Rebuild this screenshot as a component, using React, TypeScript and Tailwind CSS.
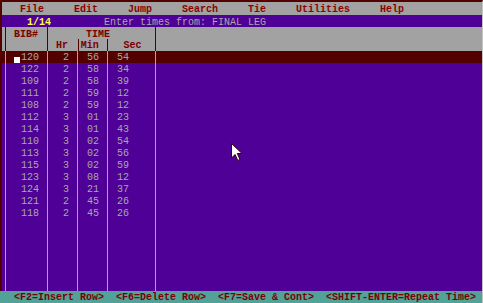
const rows: [string, string, string, string][] = [
  ['120', '2', '56', '54'],
  ['122', '2', '58', '34'],
  ['109', '2', '58', '39'],
  ['111', '2', '59', '12'],
  ['108', '2', '59', '12'],
  ['112', '3', '01', '23'],
  ['114', '3', '01', '43'],
  ['110', '3', '02', '54'],
  ['113', '3', '02', '56'],
  ['115', '3', '02', '59'],
  ['123', '3', '08', '12'],
  ['124', '3', '21', '37'],
  ['121', '2', '45', '26'],
  ['118', '2', '45', '26'],
]

const font = { fontFamily: '"Liberation Mono", "DejaVu Sans Mono", monospace' }

export default function App() {
  return (
    <div className="relative flex h-[303px] w-[483px] flex-col bg-[#4f0096] text-[10px] leading-[14px]" style={font}>
      <div className="flex flex-1 flex-col border-l-2 border-t-2 border-r border-[#520000] border-r-[#c4c4c4]">
        {/* menu */}
        <div className="h-[13px] overflow-hidden bg-[#a2a2a2] pl-[18px] font-bold leading-[15px] whitespace-pre text-[#8c0000]">
          File     Edit     Jump     Search     Tie     Utilities     Help
        </div>

        {/* status line */}
        <div className="flex h-[12px] overflow-hidden bg-[#4f0096] leading-[15px] whitespace-pre">
          <span className="ml-[25px] font-bold text-[#ffff4a]">1/14</span>
          <span className="ml-[53px] text-[#a8a8a8]">Enter times from: FINAL LEG</span>
        </div>

        {/* header */}
        <div className="flex h-[24px] overflow-hidden bg-[#a2a2a2] font-bold text-[#7a0000]">
          <div className="w-[3px]" />
          <div className="w-[42px] border-l border-[#520000] pl-[8px] pt-[1px]">BIB#</div>
          <div className="flex w-[108px] flex-col border-l border-[#520000]">
            <div className="h-[12px] pl-[38px] pt-[1px]">TIME</div>
            <div className="flex h-[12px]">
              <div className="w-[30px] pl-[8px]">Hr</div>
              <div className="w-[30px] border-l border-[#520000] pl-[2px]">Min</div>
              <div className="w-[48px] border-l border-[#520000] pl-[15px]">Sec</div>
            </div>
          </div>
          <div className="flex-1 border-l border-[#520000]" />
        </div>

        {/* rows */}
        <div className="flex flex-1 flex-col text-[#a8a8a8]">
          {rows.map((r, i) => (
            <div key={r[0]} className={`flex h-[12px] ${i === 0 ? 'bg-[#520000]' : ''}`}>
              <div className="w-[3px]" />
              <div className="relative w-[42px] border-l border-[#a8a8a8] pl-[15px]">
                {i === 0 && <span className="absolute left-[8px] top-[6px] h-[6px] w-[6px] bg-white" />}
                {r[0]}
              </div>
              <div className="w-[30px] border-l border-[#a8a8a8] pl-[15px]">{r[1]}</div>
              <div className="w-[30px] border-l border-[#a8a8a8] pl-[9px]">{r[2]}</div>
              <div className="w-[48px] border-l border-[#a8a8a8] pl-[9px]">{r[3]}</div>
              <div className="flex-1 border-l border-[#a8a8a8]" />
            </div>
          ))}
          <div className="flex flex-1">
            <div className="w-[3px]" />
            <div className="w-[42px] border-l border-[#a8a8a8]" />
            <div className="w-[30px] border-l border-[#a8a8a8]" />
            <div className="w-[30px] border-l border-[#a8a8a8]" />
            <div className="w-[48px] border-l border-[#a8a8a8]" />
            <div className="flex-1 border-l border-[#a8a8a8]" />
          </div>
        </div>
      </div>

      {/* footer */}
      <div className="h-[12px] overflow-hidden border-r border-[#c4c4c4] bg-[#52a29a] pl-[14px] font-bold whitespace-pre text-[#7a0000]">
        {'<F2=Insert Row>  <F6=Delete Row>  <F7=Save & Cont>  <SHIFT-ENTER=Repeat Time>'}
      </div>

      {/* mouse pointer */}
      <svg className="absolute left-[231px] top-[143px]" width="13" height="19" viewBox="0 0 13 19">
        <path d="M0.5 0.5 L0.5 15 L4 11.5 L6.8 17.5 L9 16.5 L6.3 10.5 L11 10.5 Z" fill="#fff" stroke="#3a0000" strokeWidth="1" />
      </svg>
    </div>
  )
}
